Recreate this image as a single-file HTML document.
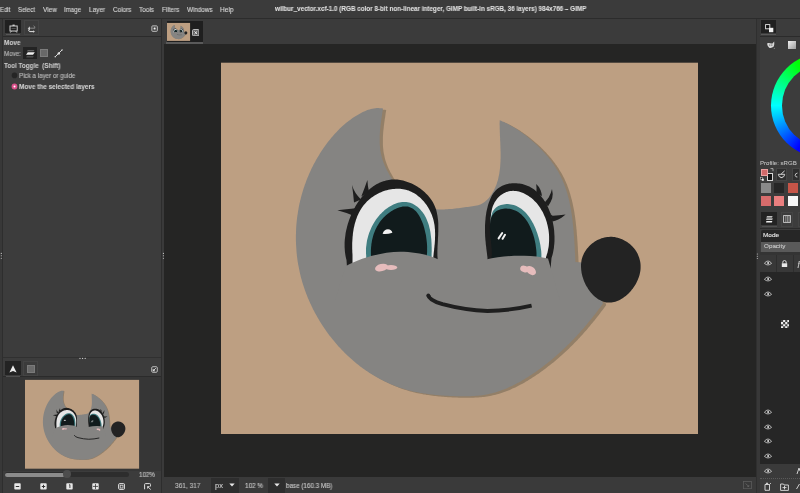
<!DOCTYPE html><html><head><meta charset="utf-8"><style>
html,body{margin:0;padding:0;width:800px;height:493px;overflow:hidden;background:#3d3d3d;font-family:"Liberation Sans", sans-serif;}
div,span,svg{position:absolute;}
span{white-space:pre;transform-origin:0 0;-webkit-text-stroke:0.12px currentColor;will-change:transform;}
</style></head><body>
<div style="left:0px;top:0px;width:800px;height:18px;background:#3b3b3b;"></div>
<div style="left:0px;top:18px;width:800px;height:1px;background:#2c2c2c;"></div>
<div style="left:0px;top:19px;width:161px;height:474px;background:#3c3c3c;"></div>
<div style="left:0px;top:19px;width:2px;height:474px;background:#383838;"></div>
<div style="left:2px;top:19px;width:1px;height:474px;background:#2e2e2e;"></div>
<div style="left:161px;top:19px;width:1px;height:474px;background:#2d2d2d;"></div>
<div style="left:162px;top:19px;width:2px;height:474px;background:#3a3a3a;"></div>
<div style="left:3px;top:36px;width:158px;height:1px;background:#2b2b2b;"></div>
<div style="left:3px;top:357px;width:158px;height:1px;background:#303030;"></div>
<div style="left:3px;top:376px;width:158px;height:1px;background:#2b2b2b;"></div>
<div style="left:3px;top:377px;width:158px;height:94px;background:#363636;"></div>
<div style="left:164px;top:19px;width:592px;height:25px;background:#3b3b3b;"></div>
<div style="left:164px;top:44px;width:592px;height:433px;background:#252524;"></div>
<div style="left:164px;top:477px;width:592px;height:16px;background:#3a3a3a;"></div>
<div style="left:756px;top:19px;width:1px;height:474px;background:#2f2f2f;"></div>
<div style="left:757px;top:19px;width:3px;height:474px;background:#383838;"></div>
<div style="left:760px;top:19px;width:40px;height:474px;background:#3c3c3c;"></div>
<div style="left:760px;top:36px;width:40px;height:1px;background:#2b2b2b;"></div>
<div style="left:166.6px;top:20.6px;width:36px;height:21.3px;background:#1f1f1f;"></div>
<div style="left:166.25px;top:42px;width:36.25px;height:1.7px;background:#5a5a5a;"></div>
<svg style="left:191.6px;top:28.7px" width="7.6" height="7.4" viewBox="0 0 7.6 7.4"><rect x="0.6" y="0.6" width="6.4" height="6.2" rx="0.9" fill="#5c5c5c" stroke="#c8c8c8" stroke-width="1"/><path d="M2.4,2.3 L5.2,5.1 M5.2,2.3 L2.4,5.1" stroke="#f0f0f0" stroke-width="1"/></svg>
<svg style="left:0;top:0" width="800" height="493" viewBox="0 0 800 493">
<g id="art">
<rect x="221" y="62.7" width="477" height="371.3" fill="#bd9f82"/>
<path d="M383.0,108.6 L382.8,110.1 L382.5,111.5 L382.3,113.0 L382.1,114.5 L381.9,116.0 L381.6,117.5 L381.4,119.0 L381.2,120.5 L381.0,122.0 L380.8,123.5 L380.6,125.0 L380.5,126.6 L380.3,128.1 L380.1,129.6 L380.0,131.1 L379.9,132.6 L379.8,134.2 L379.7,135.7 L379.7,137.2 L379.7,138.7 L379.7,140.2 L379.7,141.7 L379.7,143.2 L379.8,144.7 L379.9,146.2 L380.1,147.7 L380.2,149.2 L380.4,150.7 L380.7,152.2 L381.0,153.6 L381.3,155.1 L381.6,156.5 L382.0,158.0 L382.4,159.4 L382.9,160.8 L383.4,162.2 L383.9,163.6 L384.5,165.0 L385.1,166.4 L385.7,167.8 L386.4,169.1 L387.0,170.5 L387.8,171.8 L388.5,173.1 L389.3,174.5 L390.0,175.8 L390.8,177.1 L391.7,178.3 L392.5,179.6 L393.4,180.9 L394.3,182.1 L395.2,183.4 L396.1,184.6 L397.1,185.8 L398.0,187.0 L399.0,188.2 L400.0,189.3 L401.0,190.5 L402.0,191.6 L403.0,192.7 L404.1,193.8 L405.1,194.9 L406.2,195.9 L407.3,196.9 L408.5,197.9 L409.6,198.8 L410.8,199.7 L411.9,200.6 L413.1,201.5 L414.4,202.3 L415.6,203.0 L416.8,203.8 L418.1,204.4 L419.4,205.1 L420.7,205.7 L422.1,206.3 L423.4,206.8 L424.8,207.2 L426.2,207.6 L427.6,208.0 L429.1,208.3 L430.5,208.6 L432.0,208.8 L433.5,209.0 L435.0,209.2 L436.5,209.3 L438.0,209.4 L439.5,209.4 L441.1,209.4 L442.6,209.4 L444.2,209.4 L445.8,209.3 L447.4,209.2 L448.9,209.1 L450.5,209.0 L452.1,208.9 L453.7,208.7 L455.3,208.5 L456.9,208.3 L458.5,208.2 L460.0,208.0 L461.6,207.7 L463.2,207.5 L464.7,207.3 L466.3,207.1 L467.9,206.9 L469.4,206.7 L470.9,206.5 L472.4,206.3 L473.9,206.1 L475.4,205.8 L476.8,205.5 L478.2,205.2 L479.6,204.7 L480.9,204.2 L482.2,203.5 L483.4,202.8 L484.6,202.0 L485.7,201.1 L486.8,200.1 L487.9,199.1 L488.8,198.0 L489.8,196.8 L490.7,195.6 L491.5,194.4 L492.3,193.1 L493.1,191.8 L493.8,190.4 L494.5,189.1 L495.1,187.7 L495.7,186.3 L496.3,184.9 L496.8,183.5 L497.2,182.1 L497.7,180.7 L498.1,179.2 L498.4,177.8 L498.7,176.3 L499.0,174.9 L499.3,173.4 L499.5,171.9 L499.7,170.4 L499.9,168.9 L500.1,167.4 L500.2,165.9 L500.3,164.3 L500.4,162.8 L500.5,161.3 L500.5,159.8 L500.6,158.2 L500.6,156.7 L500.6,155.1 L500.6,153.6 L500.6,152.0 L500.5,150.5 L500.5,149.0 L500.4,147.4 L500.4,145.9 L500.3,144.3 L500.3,142.8 L500.2,141.2 L500.1,139.7 L500.1,138.2 L500.0,136.7 L499.9,135.1 L499.9,133.6 L499.8,132.1 L499.8,130.6 L499.7,129.1 L499.7,127.6 L499.7,126.1 L499.6,124.7 L499.6,123.2 L499.7,121.7 L499.7,120.3 L501.1,120.8 L502.5,121.4 L503.8,122.0 L505.2,122.7 L506.5,123.3 L507.9,124.0 L509.2,124.7 L510.5,125.4 L511.8,126.2 L513.1,126.9 L514.4,127.7 L515.7,128.5 L517.0,129.3 L518.2,130.2 L519.5,131.0 L520.7,131.9 L522.0,132.8 L523.2,133.7 L524.4,134.6 L525.7,135.6 L526.9,136.5 L528.1,137.5 L529.3,138.5 L530.5,139.4 L531.6,140.4 L532.8,141.5 L534.0,142.5 L535.1,143.5 L536.2,144.6 L537.4,145.6 L538.5,146.7 L539.6,147.8 L540.7,148.9 L541.7,150.0 L542.8,151.1 L543.8,152.2 L544.9,153.4 L545.9,154.5 L546.9,155.7 L547.9,156.8 L548.8,158.0 L549.8,159.2 L550.7,160.4 L551.6,161.6 L552.5,162.9 L553.4,164.1 L554.3,165.4 L555.1,166.6 L555.9,167.9 L556.7,169.2 L557.5,170.5 L558.3,171.8 L559.0,173.1 L559.7,174.4 L560.4,175.8 L561.1,177.1 L561.7,178.5 L562.3,179.8 L562.9,181.2 L563.5,182.6 L564.1,184.0 L564.6,185.4 L565.1,186.8 L565.6,188.2 L566.1,189.6 L566.5,191.1 L567.0,192.5 L567.4,194.0 L567.8,195.4 L568.2,196.9 L568.6,198.3 L568.9,199.8 L569.3,201.3 L569.6,202.8 L569.9,204.3 L570.2,205.8 L570.5,207.3 L570.8,208.8 L571.1,210.3 L571.3,211.8 L571.5,213.3 L571.8,214.8 L572.0,216.3 L572.2,217.8 L572.4,219.4 L572.6,220.9 L572.7,222.4 L572.9,224.0 L573.1,225.5 L573.2,227.0 L573.4,228.6 L573.5,230.1 L573.6,231.6 L573.7,233.2 L573.9,234.7 L574.0,236.2 L574.1,237.8 L574.2,239.3 L574.3,240.8 L574.4,242.4 L574.5,243.9 L574.6,245.4 L574.7,246.9 L574.7,248.5 L574.8,250.0 L574.9,251.5 L575.0,253.0 L575.1,254.5 L575.2,256.0 L575.2,257.5 L575.3,259.0 L575.4,260.5 L575.5,262.0 L590.0,263.0 L603.0,303.5 L602.1,304.7 L601.2,306.0 L600.3,307.2 L599.4,308.4 L598.5,309.6 L597.6,310.8 L596.7,312.0 L595.8,313.2 L594.8,314.4 L593.9,315.6 L593.0,316.8 L592.0,318.0 L591.1,319.2 L590.1,320.3 L589.2,321.5 L588.2,322.6 L587.3,323.8 L586.3,325.0 L585.3,326.1 L584.4,327.2 L583.4,328.4 L582.4,329.5 L581.4,330.6 L580.4,331.8 L579.4,332.9 L578.4,334.0 L577.4,335.1 L576.4,336.2 L575.3,337.3 L574.3,338.4 L573.3,339.5 L572.2,340.5 L571.2,341.6 L570.1,342.7 L569.1,343.7 L568.0,344.8 L566.9,345.8 L565.9,346.9 L564.8,347.9 L563.7,348.9 L562.6,350.0 L561.5,351.0 L560.4,352.0 L559.3,353.0 L558.2,354.0 L557.0,355.0 L555.9,356.0 L554.8,357.0 L553.6,358.0 L552.5,358.9 L551.3,359.9 L550.2,360.9 L549.0,361.8 L547.8,362.8 L546.6,363.7 L545.4,364.6 L544.2,365.6 L543.0,366.5 L541.8,367.4 L540.6,368.3 L539.4,369.2 L538.2,370.1 L536.9,371.0 L535.7,371.9 L534.4,372.7 L533.1,373.6 L531.9,374.4 L530.6,375.3 L529.3,376.1 L528.0,377.0 L526.7,377.8 L525.4,378.6 L524.1,379.4 L522.8,380.1 L521.5,380.9 L520.2,381.7 L518.8,382.4 L517.5,383.1 L516.2,383.8 L514.8,384.5 L513.4,385.2 L512.1,385.9 L510.7,386.5 L509.3,387.1 L508.0,387.8 L506.6,388.4 L505.2,388.9 L503.8,389.5 L502.4,390.0 L501.0,390.5 L499.6,391.0 L498.2,391.5 L496.7,391.9 L495.3,392.4 L493.9,392.8 L492.5,393.2 L491.0,393.5 L489.6,393.8 L488.1,394.2 L486.7,394.4 L485.2,394.7 L483.8,394.9 L482.3,395.2 L480.8,395.4 L479.4,395.5 L477.9,395.7 L476.4,395.8 L474.9,395.9 L473.5,396.0 L472.0,396.1 L470.5,396.2 L469.0,396.3 L467.5,396.3 L466.0,396.3 L464.5,396.3 L463.0,396.3 L461.5,396.3 L460.0,396.3 L458.5,396.3 L456.9,396.2 L455.4,396.2 L453.9,396.1 L452.4,396.1 L450.9,396.0 L449.3,395.9 L447.8,395.8 L446.3,395.7 L444.8,395.7 L443.2,395.6 L441.7,395.4 L440.2,395.3 L438.7,395.2 L437.1,395.1 L435.6,394.9 L434.1,394.8 L432.5,394.6 L431.0,394.4 L429.5,394.2 L428.0,394.1 L426.5,393.8 L425.0,393.6 L423.4,393.4 L421.9,393.1 L420.4,392.9 L418.9,392.6 L417.4,392.3 L416.0,392.0 L414.5,391.7 L413.0,391.4 L411.5,391.0 L410.1,390.7 L408.6,390.3 L407.1,389.9 L405.7,389.5 L404.2,389.1 L402.8,388.6 L401.4,388.2 L400.0,387.7 L398.5,387.2 L397.1,386.7 L395.7,386.2 L394.3,385.6 L392.9,385.1 L391.6,384.5 L390.2,383.9 L388.8,383.3 L387.5,382.7 L386.1,382.1 L384.8,381.5 L383.4,380.8 L382.1,380.1 L380.8,379.4 L379.4,378.7 L378.1,378.0 L376.8,377.3 L375.5,376.6 L374.2,375.8 L373.0,375.0 L371.7,374.3 L370.4,373.5 L369.2,372.7 L367.9,371.8 L366.7,371.0 L365.5,370.2 L364.2,369.3 L363.0,368.4 L361.8,367.6 L360.6,366.7 L359.4,365.7 L358.3,364.8 L357.1,363.9 L355.9,363.0 L354.8,362.0 L353.6,361.0 L352.5,360.1 L351.4,359.1 L350.2,358.1 L349.1,357.1 L348.0,356.0 L346.9,355.0 L345.9,354.0 L344.8,352.9 L343.7,351.8 L342.7,350.8 L341.6,349.7 L340.6,348.6 L339.6,347.5 L338.5,346.4 L337.5,345.2 L336.5,344.1 L335.6,343.0 L334.6,341.8 L333.6,340.6 L332.7,339.5 L331.7,338.3 L330.8,337.1 L329.8,335.9 L328.9,334.7 L328.0,333.5 L327.1,332.3 L326.2,331.0 L325.4,329.8 L324.5,328.5 L323.7,327.3 L322.8,326.0 L322.0,324.7 L321.2,323.5 L320.4,322.2 L319.6,320.9 L318.8,319.6 L318.0,318.3 L317.3,317.0 L316.5,315.6 L315.8,314.3 L315.0,313.0 L314.3,311.6 L313.6,310.3 L312.9,308.9 L312.3,307.6 L311.6,306.2 L311.0,304.8 L310.3,303.5 L309.7,302.1 L309.1,300.7 L308.5,299.3 L307.9,297.9 L307.3,296.5 L306.8,295.1 L306.2,293.7 L305.7,292.3 L305.2,290.9 L304.7,289.4 L304.2,288.0 L303.7,286.6 L303.2,285.1 L302.8,283.7 L302.3,282.2 L301.9,280.8 L301.5,279.3 L301.1,277.9 L300.7,276.4 L300.4,275.0 L300.0,273.5 L299.7,272.0 L299.4,270.6 L299.1,269.1 L298.8,267.6 L298.5,266.1 L298.2,264.7 L298.0,263.2 L297.7,261.7 L297.5,260.2 L297.3,258.7 L297.1,257.2 L296.9,255.7 L296.8,254.3 L296.6,252.8 L296.5,251.3 L296.4,249.8 L296.3,248.3 L296.2,246.8 L296.1,245.3 L296.0,243.8 L296.0,242.3 L295.9,240.8 L295.9,239.3 L295.9,237.8 L295.9,236.3 L295.9,234.8 L296.0,233.3 L296.0,231.8 L296.1,230.3 L296.1,228.8 L296.2,227.3 L296.3,225.8 L296.4,224.3 L296.6,222.8 L296.7,221.3 L296.9,219.8 L297.0,218.3 L297.2,216.9 L297.4,215.4 L297.7,213.9 L297.9,212.4 L298.1,210.9 L298.4,209.5 L298.6,208.0 L298.9,206.5 L299.2,205.0 L299.5,203.6 L299.9,202.1 L300.2,200.6 L300.6,199.2 L300.9,197.7 L301.3,196.3 L301.7,194.8 L302.1,193.4 L302.5,191.9 L303.0,190.5 L303.4,189.1 L303.9,187.6 L304.4,186.2 L304.8,184.8 L305.4,183.4 L305.9,182.0 L306.4,180.6 L306.9,179.2 L307.5,177.8 L308.1,176.4 L308.7,175.0 L309.3,173.6 L309.9,172.2 L310.5,170.9 L311.1,169.5 L311.8,168.1 L312.5,166.8 L313.1,165.4 L313.8,164.1 L314.6,162.8 L315.3,161.4 L316.0,160.1 L316.8,158.8 L317.5,157.5 L318.3,156.2 L319.1,154.9 L319.9,153.6 L320.7,152.3 L321.5,151.0 L322.4,149.8 L323.2,148.5 L324.1,147.3 L325.0,146.0 L325.9,144.8 L326.8,143.6 L327.7,142.3 L328.7,141.1 L329.6,139.9 L330.6,138.8 L331.5,137.6 L332.5,136.4 L333.5,135.3 L334.6,134.1 L335.6,133.0 L336.6,131.9 L337.7,130.8 L338.7,129.7 L339.8,128.6 L340.9,127.6 L342.0,126.6 L343.1,125.6 L344.3,124.6 L345.4,123.6 L346.6,122.6 L347.7,121.7 L348.9,120.8 L350.1,119.9 L351.3,119.0 L352.6,118.1 L353.8,117.3 L355.0,116.5 L356.3,115.7 L357.6,114.9 L358.9,114.2 L360.2,113.5 L361.5,112.8 L362.8,112.1 L364.1,111.5 L365.5,110.9 L366.8,110.3 L368.2,109.8 L369.6,109.4 L371.0,109.0 L372.4,108.7 L373.9,108.4 L375.4,108.2 L376.8,108.1 L378.4,108.1 L379.9,108.2 L381.4,108.3 L383.0,108.6Z" fill="#937f67" transform="translate(3.2,1.5)"/>
<path d="M383.0,108.6 L382.8,110.1 L382.5,111.5 L382.3,113.0 L382.1,114.5 L381.9,116.0 L381.6,117.5 L381.4,119.0 L381.2,120.5 L381.0,122.0 L380.8,123.5 L380.6,125.0 L380.5,126.6 L380.3,128.1 L380.1,129.6 L380.0,131.1 L379.9,132.6 L379.8,134.2 L379.7,135.7 L379.7,137.2 L379.7,138.7 L379.7,140.2 L379.7,141.7 L379.7,143.2 L379.8,144.7 L379.9,146.2 L380.1,147.7 L380.2,149.2 L380.4,150.7 L380.7,152.2 L381.0,153.6 L381.3,155.1 L381.6,156.5 L382.0,158.0 L382.4,159.4 L382.9,160.8 L383.4,162.2 L383.9,163.6 L384.5,165.0 L385.1,166.4 L385.7,167.8 L386.4,169.1 L387.0,170.5 L387.8,171.8 L388.5,173.1 L389.3,174.5 L390.0,175.8 L390.8,177.1 L391.7,178.3 L392.5,179.6 L393.4,180.9 L394.3,182.1 L395.2,183.4 L396.1,184.6 L397.1,185.8 L398.0,187.0 L399.0,188.2 L400.0,189.3 L401.0,190.5 L402.0,191.6 L403.0,192.7 L404.1,193.8 L405.1,194.9 L406.2,195.9 L407.3,196.9 L408.5,197.9 L409.6,198.8 L410.8,199.7 L411.9,200.6 L413.1,201.5 L414.4,202.3 L415.6,203.0 L416.8,203.8 L418.1,204.4 L419.4,205.1 L420.7,205.7 L422.1,206.3 L423.4,206.8 L424.8,207.2 L426.2,207.6 L427.6,208.0 L429.1,208.3 L430.5,208.6 L432.0,208.8 L433.5,209.0 L435.0,209.2 L436.5,209.3 L438.0,209.4 L439.5,209.4 L441.1,209.4 L442.6,209.4 L444.2,209.4 L445.8,209.3 L447.4,209.2 L448.9,209.1 L450.5,209.0 L452.1,208.9 L453.7,208.7 L455.3,208.5 L456.9,208.3 L458.5,208.2 L460.0,208.0 L461.6,207.7 L463.2,207.5 L464.7,207.3 L466.3,207.1 L467.9,206.9 L469.4,206.7 L470.9,206.5 L472.4,206.3 L473.9,206.1 L475.4,205.8 L476.8,205.5 L478.2,205.2 L479.6,204.7 L480.9,204.2 L482.2,203.5 L483.4,202.8 L484.6,202.0 L485.7,201.1 L486.8,200.1 L487.9,199.1 L488.8,198.0 L489.8,196.8 L490.7,195.6 L491.5,194.4 L492.3,193.1 L493.1,191.8 L493.8,190.4 L494.5,189.1 L495.1,187.7 L495.7,186.3 L496.3,184.9 L496.8,183.5 L497.2,182.1 L497.7,180.7 L498.1,179.2 L498.4,177.8 L498.7,176.3 L499.0,174.9 L499.3,173.4 L499.5,171.9 L499.7,170.4 L499.9,168.9 L500.1,167.4 L500.2,165.9 L500.3,164.3 L500.4,162.8 L500.5,161.3 L500.5,159.8 L500.6,158.2 L500.6,156.7 L500.6,155.1 L500.6,153.6 L500.6,152.0 L500.5,150.5 L500.5,149.0 L500.4,147.4 L500.4,145.9 L500.3,144.3 L500.3,142.8 L500.2,141.2 L500.1,139.7 L500.1,138.2 L500.0,136.7 L499.9,135.1 L499.9,133.6 L499.8,132.1 L499.8,130.6 L499.7,129.1 L499.7,127.6 L499.7,126.1 L499.6,124.7 L499.6,123.2 L499.7,121.7 L499.7,120.3 L501.1,120.8 L502.5,121.4 L503.8,122.0 L505.2,122.7 L506.5,123.3 L507.9,124.0 L509.2,124.7 L510.5,125.4 L511.8,126.2 L513.1,126.9 L514.4,127.7 L515.7,128.5 L517.0,129.3 L518.2,130.2 L519.5,131.0 L520.7,131.9 L522.0,132.8 L523.2,133.7 L524.4,134.6 L525.7,135.6 L526.9,136.5 L528.1,137.5 L529.3,138.5 L530.5,139.4 L531.6,140.4 L532.8,141.5 L534.0,142.5 L535.1,143.5 L536.2,144.6 L537.4,145.6 L538.5,146.7 L539.6,147.8 L540.7,148.9 L541.7,150.0 L542.8,151.1 L543.8,152.2 L544.9,153.4 L545.9,154.5 L546.9,155.7 L547.9,156.8 L548.8,158.0 L549.8,159.2 L550.7,160.4 L551.6,161.6 L552.5,162.9 L553.4,164.1 L554.3,165.4 L555.1,166.6 L555.9,167.9 L556.7,169.2 L557.5,170.5 L558.3,171.8 L559.0,173.1 L559.7,174.4 L560.4,175.8 L561.1,177.1 L561.7,178.5 L562.3,179.8 L562.9,181.2 L563.5,182.6 L564.1,184.0 L564.6,185.4 L565.1,186.8 L565.6,188.2 L566.1,189.6 L566.5,191.1 L567.0,192.5 L567.4,194.0 L567.8,195.4 L568.2,196.9 L568.6,198.3 L568.9,199.8 L569.3,201.3 L569.6,202.8 L569.9,204.3 L570.2,205.8 L570.5,207.3 L570.8,208.8 L571.1,210.3 L571.3,211.8 L571.5,213.3 L571.8,214.8 L572.0,216.3 L572.2,217.8 L572.4,219.4 L572.6,220.9 L572.7,222.4 L572.9,224.0 L573.1,225.5 L573.2,227.0 L573.4,228.6 L573.5,230.1 L573.6,231.6 L573.7,233.2 L573.9,234.7 L574.0,236.2 L574.1,237.8 L574.2,239.3 L574.3,240.8 L574.4,242.4 L574.5,243.9 L574.6,245.4 L574.7,246.9 L574.7,248.5 L574.8,250.0 L574.9,251.5 L575.0,253.0 L575.1,254.5 L575.2,256.0 L575.2,257.5 L575.3,259.0 L575.4,260.5 L575.5,262.0 L590.0,263.0 L603.0,303.5 L602.1,304.7 L601.2,306.0 L600.3,307.2 L599.4,308.4 L598.5,309.6 L597.6,310.8 L596.7,312.0 L595.8,313.2 L594.8,314.4 L593.9,315.6 L593.0,316.8 L592.0,318.0 L591.1,319.2 L590.1,320.3 L589.2,321.5 L588.2,322.6 L587.3,323.8 L586.3,325.0 L585.3,326.1 L584.4,327.2 L583.4,328.4 L582.4,329.5 L581.4,330.6 L580.4,331.8 L579.4,332.9 L578.4,334.0 L577.4,335.1 L576.4,336.2 L575.3,337.3 L574.3,338.4 L573.3,339.5 L572.2,340.5 L571.2,341.6 L570.1,342.7 L569.1,343.7 L568.0,344.8 L566.9,345.8 L565.9,346.9 L564.8,347.9 L563.7,348.9 L562.6,350.0 L561.5,351.0 L560.4,352.0 L559.3,353.0 L558.2,354.0 L557.0,355.0 L555.9,356.0 L554.8,357.0 L553.6,358.0 L552.5,358.9 L551.3,359.9 L550.2,360.9 L549.0,361.8 L547.8,362.8 L546.6,363.7 L545.4,364.6 L544.2,365.6 L543.0,366.5 L541.8,367.4 L540.6,368.3 L539.4,369.2 L538.2,370.1 L536.9,371.0 L535.7,371.9 L534.4,372.7 L533.1,373.6 L531.9,374.4 L530.6,375.3 L529.3,376.1 L528.0,377.0 L526.7,377.8 L525.4,378.6 L524.1,379.4 L522.8,380.1 L521.5,380.9 L520.2,381.7 L518.8,382.4 L517.5,383.1 L516.2,383.8 L514.8,384.5 L513.4,385.2 L512.1,385.9 L510.7,386.5 L509.3,387.1 L508.0,387.8 L506.6,388.4 L505.2,388.9 L503.8,389.5 L502.4,390.0 L501.0,390.5 L499.6,391.0 L498.2,391.5 L496.7,391.9 L495.3,392.4 L493.9,392.8 L492.5,393.2 L491.0,393.5 L489.6,393.8 L488.1,394.2 L486.7,394.4 L485.2,394.7 L483.8,394.9 L482.3,395.2 L480.8,395.4 L479.4,395.5 L477.9,395.7 L476.4,395.8 L474.9,395.9 L473.5,396.0 L472.0,396.1 L470.5,396.2 L469.0,396.3 L467.5,396.3 L466.0,396.3 L464.5,396.3 L463.0,396.3 L461.5,396.3 L460.0,396.3 L458.5,396.3 L456.9,396.2 L455.4,396.2 L453.9,396.1 L452.4,396.1 L450.9,396.0 L449.3,395.9 L447.8,395.8 L446.3,395.7 L444.8,395.7 L443.2,395.6 L441.7,395.4 L440.2,395.3 L438.7,395.2 L437.1,395.1 L435.6,394.9 L434.1,394.8 L432.5,394.6 L431.0,394.4 L429.5,394.2 L428.0,394.1 L426.5,393.8 L425.0,393.6 L423.4,393.4 L421.9,393.1 L420.4,392.9 L418.9,392.6 L417.4,392.3 L416.0,392.0 L414.5,391.7 L413.0,391.4 L411.5,391.0 L410.1,390.7 L408.6,390.3 L407.1,389.9 L405.7,389.5 L404.2,389.1 L402.8,388.6 L401.4,388.2 L400.0,387.7 L398.5,387.2 L397.1,386.7 L395.7,386.2 L394.3,385.6 L392.9,385.1 L391.6,384.5 L390.2,383.9 L388.8,383.3 L387.5,382.7 L386.1,382.1 L384.8,381.5 L383.4,380.8 L382.1,380.1 L380.8,379.4 L379.4,378.7 L378.1,378.0 L376.8,377.3 L375.5,376.6 L374.2,375.8 L373.0,375.0 L371.7,374.3 L370.4,373.5 L369.2,372.7 L367.9,371.8 L366.7,371.0 L365.5,370.2 L364.2,369.3 L363.0,368.4 L361.8,367.6 L360.6,366.7 L359.4,365.7 L358.3,364.8 L357.1,363.9 L355.9,363.0 L354.8,362.0 L353.6,361.0 L352.5,360.1 L351.4,359.1 L350.2,358.1 L349.1,357.1 L348.0,356.0 L346.9,355.0 L345.9,354.0 L344.8,352.9 L343.7,351.8 L342.7,350.8 L341.6,349.7 L340.6,348.6 L339.6,347.5 L338.5,346.4 L337.5,345.2 L336.5,344.1 L335.6,343.0 L334.6,341.8 L333.6,340.6 L332.7,339.5 L331.7,338.3 L330.8,337.1 L329.8,335.9 L328.9,334.7 L328.0,333.5 L327.1,332.3 L326.2,331.0 L325.4,329.8 L324.5,328.5 L323.7,327.3 L322.8,326.0 L322.0,324.7 L321.2,323.5 L320.4,322.2 L319.6,320.9 L318.8,319.6 L318.0,318.3 L317.3,317.0 L316.5,315.6 L315.8,314.3 L315.0,313.0 L314.3,311.6 L313.6,310.3 L312.9,308.9 L312.3,307.6 L311.6,306.2 L311.0,304.8 L310.3,303.5 L309.7,302.1 L309.1,300.7 L308.5,299.3 L307.9,297.9 L307.3,296.5 L306.8,295.1 L306.2,293.7 L305.7,292.3 L305.2,290.9 L304.7,289.4 L304.2,288.0 L303.7,286.6 L303.2,285.1 L302.8,283.7 L302.3,282.2 L301.9,280.8 L301.5,279.3 L301.1,277.9 L300.7,276.4 L300.4,275.0 L300.0,273.5 L299.7,272.0 L299.4,270.6 L299.1,269.1 L298.8,267.6 L298.5,266.1 L298.2,264.7 L298.0,263.2 L297.7,261.7 L297.5,260.2 L297.3,258.7 L297.1,257.2 L296.9,255.7 L296.8,254.3 L296.6,252.8 L296.5,251.3 L296.4,249.8 L296.3,248.3 L296.2,246.8 L296.1,245.3 L296.0,243.8 L296.0,242.3 L295.9,240.8 L295.9,239.3 L295.9,237.8 L295.9,236.3 L295.9,234.8 L296.0,233.3 L296.0,231.8 L296.1,230.3 L296.1,228.8 L296.2,227.3 L296.3,225.8 L296.4,224.3 L296.6,222.8 L296.7,221.3 L296.9,219.8 L297.0,218.3 L297.2,216.9 L297.4,215.4 L297.7,213.9 L297.9,212.4 L298.1,210.9 L298.4,209.5 L298.6,208.0 L298.9,206.5 L299.2,205.0 L299.5,203.6 L299.9,202.1 L300.2,200.6 L300.6,199.2 L300.9,197.7 L301.3,196.3 L301.7,194.8 L302.1,193.4 L302.5,191.9 L303.0,190.5 L303.4,189.1 L303.9,187.6 L304.4,186.2 L304.8,184.8 L305.4,183.4 L305.9,182.0 L306.4,180.6 L306.9,179.2 L307.5,177.8 L308.1,176.4 L308.7,175.0 L309.3,173.6 L309.9,172.2 L310.5,170.9 L311.1,169.5 L311.8,168.1 L312.5,166.8 L313.1,165.4 L313.8,164.1 L314.6,162.8 L315.3,161.4 L316.0,160.1 L316.8,158.8 L317.5,157.5 L318.3,156.2 L319.1,154.9 L319.9,153.6 L320.7,152.3 L321.5,151.0 L322.4,149.8 L323.2,148.5 L324.1,147.3 L325.0,146.0 L325.9,144.8 L326.8,143.6 L327.7,142.3 L328.7,141.1 L329.6,139.9 L330.6,138.8 L331.5,137.6 L332.5,136.4 L333.5,135.3 L334.6,134.1 L335.6,133.0 L336.6,131.9 L337.7,130.8 L338.7,129.7 L339.8,128.6 L340.9,127.6 L342.0,126.6 L343.1,125.6 L344.3,124.6 L345.4,123.6 L346.6,122.6 L347.7,121.7 L348.9,120.8 L350.1,119.9 L351.3,119.0 L352.6,118.1 L353.8,117.3 L355.0,116.5 L356.3,115.7 L357.6,114.9 L358.9,114.2 L360.2,113.5 L361.5,112.8 L362.8,112.1 L364.1,111.5 L365.5,110.9 L366.8,110.3 L368.2,109.8 L369.6,109.4 L371.0,109.0 L372.4,108.7 L373.9,108.4 L375.4,108.2 L376.8,108.1 L378.4,108.1 L379.9,108.2 L381.4,108.3 L383.0,108.6Z" fill="#858482"/>
<path d="M611.8,236.8 L613.3,236.9 L614.8,237.1 L616.2,237.4 L617.7,237.8 L619.2,238.2 L620.6,238.7 L622.1,239.3 L623.5,239.9 L624.8,240.7 L626.2,241.4 L627.5,242.3 L628.7,243.2 L629.9,244.1 L631.1,245.2 L632.2,246.2 L633.3,247.4 L634.2,248.5 L635.2,249.7 L636.0,251.0 L636.8,252.3 L637.5,253.6 L638.1,255.0 L638.7,256.4 L639.2,257.8 L639.6,259.2 L640.0,260.7 L640.3,262.2 L640.5,263.7 L640.6,265.2 L640.6,266.7 L640.6,268.2 L640.5,269.7 L640.3,271.2 L640.0,272.8 L639.7,274.3 L639.3,275.8 L638.8,277.2 L638.2,278.7 L637.6,280.2 L637.0,281.6 L636.3,283.0 L635.5,284.4 L634.7,285.8 L633.8,287.1 L632.9,288.4 L631.9,289.6 L630.9,290.9 L629.9,292.0 L628.8,293.2 L627.7,294.2 L626.6,295.3 L625.4,296.2 L624.2,297.1 L623.0,298.0 L621.7,298.8 L620.5,299.5 L619.2,300.2 L617.9,300.8 L616.6,301.3 L615.3,301.7 L614.0,302.1 L612.7,302.3 L611.4,302.5 L610.0,302.6 L608.7,302.6 L607.4,302.6 L606.1,302.4 L604.8,302.1 L603.6,301.7 L602.3,301.3 L601.1,300.7 L599.9,300.1 L598.6,299.4 L597.5,298.7 L596.3,297.8 L595.2,296.9 L594.1,295.9 L593.0,294.9 L592.0,293.8 L591.0,292.7 L590.0,291.5 L589.1,290.2 L588.2,289.0 L587.4,287.6 L586.5,286.3 L585.8,284.9 L585.1,283.4 L584.4,282.0 L583.8,280.5 L583.3,279.0 L582.8,277.5 L582.3,276.0 L582.0,274.4 L581.6,272.9 L581.4,271.3 L581.2,269.8 L581.1,268.2 L581.0,266.7 L581.0,265.1 L581.1,263.6 L581.3,262.1 L581.5,260.6 L581.8,259.1 L582.2,257.7 L582.7,256.3 L583.3,254.9 L583.9,253.6 L584.6,252.3 L585.4,251.0 L586.2,249.8 L587.1,248.6 L588.1,247.4 L589.1,246.3 L590.1,245.3 L591.2,244.3 L592.4,243.3 L593.6,242.4 L594.8,241.6 L596.1,240.8 L597.4,240.1 L598.7,239.4 L600.1,238.9 L601.5,238.3 L602.9,237.9 L604.4,237.5 L605.8,237.2 L607.3,237.0 L608.8,236.9 L610.3,236.8Z" fill="#232323"/>
<path d="M347.5,275.0 L346.5,260.0 L346.1,258.6 L345.8,257.3 L345.5,255.8 L345.3,254.4 L345.1,253.0 L344.9,251.5 L344.8,250.1 L344.7,248.6 L344.6,247.1 L344.6,245.6 L344.6,244.1 L344.6,242.6 L344.7,241.0 L344.8,239.5 L345.0,237.9 L345.2,236.4 L345.4,234.9 L345.6,233.3 L345.9,231.8 L346.2,230.2 L346.6,228.7 L347.0,227.1 L347.4,225.6 L347.8,224.0 L348.3,222.5 L348.8,221.0 L349.3,219.5 L349.9,218.0 L350.5,216.5 L351.1,215.0 L351.7,213.6 L352.4,212.1 L353.1,210.7 L353.8,209.3 L354.6,207.9 L355.3,206.5 L356.2,205.1 L357.0,203.8 L357.8,202.5 L358.7,201.2 L359.6,199.9 L360.5,198.7 L361.5,197.5 L362.4,196.3 L363.4,195.2 L364.5,194.0 L365.5,193.0 L366.5,191.9 L367.6,190.9 L368.7,189.9 L369.8,188.9 L371.0,188.0 L372.1,187.2 L373.3,186.3 L374.5,185.5 L375.7,184.8 L376.9,184.1 L378.2,183.4 L379.4,182.8 L380.7,182.3 L382.0,181.8 L383.3,181.3 L384.7,180.9 L386.0,180.5 L387.4,180.2 L388.7,180.0 L390.1,179.8 L391.5,179.6 L392.9,179.5 L394.3,179.5 L395.8,179.5 L397.2,179.6 L398.7,179.8 L400.1,180.0 L401.6,180.3 L403.1,180.6 L404.5,181.0 L406.0,181.4 L407.4,181.9 L408.9,182.4 L410.3,183.0 L411.7,183.6 L413.1,184.3 L414.5,185.0 L415.9,185.8 L417.2,186.6 L418.6,187.4 L419.9,188.3 L421.1,189.3 L422.4,190.2 L423.6,191.2 L424.8,192.3 L425.9,193.4 L427.0,194.5 L428.0,195.6 L429.0,196.8 L430.0,198.0 L430.9,199.3 L431.8,200.5 L432.6,201.8 L433.3,203.1 L434.0,204.5 L434.6,205.8 L435.2,207.2 L435.7,208.6 L436.2,210.1 L436.6,211.5 L436.9,213.0 L437.2,214.5 L437.5,216.0 L437.7,217.5 L437.9,219.0 L438.1,220.5 L438.2,222.1 L438.3,223.6 L438.3,225.2 L438.3,226.7 L438.3,228.3 L438.3,229.9 L438.3,231.4 L438.2,233.0 L438.2,234.6 L438.1,236.1 L438.0,237.7 L437.9,239.3 L437.9,240.8 L437.8,242.3 L437.7,243.9 L437.6,245.4 L437.5,246.9 L437.5,248.4 L437.4,249.9 L437.4,251.4 L437.4,252.9 L437.4,254.3 L437.4,255.7 L437.5,257.1 L437.6,258.5 L437.0,275.0Z" fill="#1e1e1e"/>
<path d="M352.5,275.0 L352.5,254.7 L352.4,253.3 L352.3,251.9 L352.3,250.5 L352.2,249.0 L352.2,247.5 L352.2,246.0 L352.2,244.5 L352.2,243.0 L352.3,241.5 L352.4,239.9 L352.5,238.4 L352.6,236.8 L352.8,235.3 L352.9,233.7 L353.1,232.2 L353.4,230.6 L353.6,229.1 L353.9,227.5 L354.3,226.0 L354.6,224.5 L355.0,223.0 L355.5,221.5 L355.9,220.0 L356.5,218.5 L357.0,217.0 L357.6,215.6 L358.2,214.2 L358.9,212.8 L359.6,211.4 L360.4,210.1 L361.2,208.8 L362.0,207.5 L362.9,206.3 L363.8,205.0 L364.8,203.9 L365.9,202.7 L366.9,201.6 L368.1,200.5 L369.2,199.5 L370.4,198.5 L371.6,197.6 L372.9,196.7 L374.2,195.8 L375.5,195.0 L376.9,194.2 L378.2,193.5 L379.6,192.8 L381.1,192.2 L382.5,191.6 L383.9,191.1 L385.4,190.6 L386.9,190.2 L388.3,189.8 L389.8,189.5 L391.3,189.2 L392.8,189.0 L394.3,188.9 L395.8,188.8 L397.2,188.7 L398.7,188.7 L400.2,188.8 L401.6,189.0 L403.1,189.2 L404.5,189.4 L405.9,189.8 L407.3,190.2 L408.6,190.6 L410.0,191.2 L411.3,191.7 L412.6,192.4 L413.8,193.1 L415.1,193.8 L416.3,194.6 L417.4,195.5 L418.6,196.4 L419.7,197.3 L420.8,198.3 L421.9,199.4 L422.9,200.4 L423.9,201.6 L424.8,202.7 L425.8,203.9 L426.6,205.1 L427.5,206.4 L428.3,207.7 L429.0,209.0 L429.8,210.4 L430.4,211.8 L431.1,213.2 L431.7,214.6 L432.2,216.1 L432.7,217.5 L433.2,219.0 L433.6,220.5 L433.9,222.1 L434.2,223.6 L434.5,225.1 L434.7,226.7 L434.8,228.3 L435.0,229.8 L435.0,231.4 L435.1,233.0 L435.1,234.6 L435.1,236.1 L435.0,237.7 L435.0,239.3 L434.9,240.9 L434.8,242.4 L434.7,244.0 L434.5,245.5 L434.4,247.0 L434.2,248.6 L434.1,250.1 L433.9,251.6 L433.7,253.0 L433.6,254.5 L433.4,255.9 L433.3,257.3 L433.0,275.0Z" fill="#e6e6e6"/>
<path d="M366.2,275.0 L366.2,256.0 L366.1,254.6 L366.0,253.2 L366.0,251.7 L366.0,250.3 L366.0,248.8 L366.1,247.3 L366.3,245.8 L366.5,244.3 L366.7,242.8 L366.9,241.3 L367.2,239.8 L367.6,238.3 L368.0,236.8 L368.4,235.3 L368.9,233.8 L369.4,232.3 L370.0,230.9 L370.6,229.4 L371.2,227.9 L371.9,226.5 L372.7,225.1 L373.4,223.7 L374.3,222.3 L375.1,221.0 L376.0,219.6 L377.0,218.3 L378.0,217.1 L379.0,215.8 L380.0,214.6 L381.2,213.4 L382.3,212.3 L383.5,211.2 L384.7,210.1 L386.0,209.1 L387.2,208.2 L388.5,207.3 L389.8,206.5 L391.2,205.7 L392.5,205.0 L393.9,204.3 L395.3,203.7 L396.6,203.2 L398.0,202.8 L399.4,202.4 L400.8,202.2 L402.2,202.0 L403.5,201.9 L404.9,201.9 L406.2,202.0 L407.6,202.2 L408.9,202.4 L410.2,202.8 L411.4,203.3 L412.7,203.8 L413.9,204.5 L415.1,205.2 L416.2,205.9 L417.4,206.8 L418.5,207.7 L419.5,208.7 L420.5,209.8 L421.5,210.9 L422.4,212.1 L423.3,213.3 L424.2,214.6 L425.0,215.9 L425.7,217.3 L426.4,218.7 L427.0,220.2 L427.6,221.7 L428.2,223.2 L428.7,224.7 L429.1,226.3 L429.5,227.9 L429.9,229.5 L430.2,231.1 L430.5,232.8 L430.7,234.4 L430.9,236.1 L431.1,237.7 L431.3,239.3 L431.4,241.0 L431.5,242.6 L431.6,244.2 L431.6,245.8 L431.7,247.3 L431.7,248.9 L431.7,250.4 L431.7,251.8 L431.6,253.3 L431.6,254.7 L431.6,256.0 L431.5,257.3 L431.5,275.0Z" fill="#3f7d80"/>
<path d="M371.0,275.0 L371.0,256.0 L370.9,254.5 L370.9,253.0 L370.9,251.5 L370.9,250.0 L371.0,248.5 L371.1,247.0 L371.3,245.5 L371.4,244.0 L371.7,242.5 L371.9,241.0 L372.2,239.5 L372.6,238.0 L373.0,236.5 L373.4,235.1 L373.9,233.6 L374.4,232.2 L375.0,230.7 L375.6,229.3 L376.3,227.9 L377.0,226.6 L377.8,225.2 L378.6,223.9 L379.5,222.6 L380.4,221.3 L381.4,220.0 L382.5,218.8 L383.6,217.6 L384.7,216.4 L386.0,215.3 L387.2,214.2 L388.5,213.2 L389.9,212.2 L391.2,211.3 L392.6,210.4 L394.1,209.6 L395.5,208.9 L396.9,208.3 L398.3,207.7 L399.8,207.3 L401.2,206.9 L402.6,206.6 L404.0,206.5 L405.3,206.4 L406.6,206.5 L407.9,206.6 L409.2,206.9 L410.4,207.4 L411.5,207.9 L412.6,208.5 L413.7,209.3 L414.7,210.2 L415.7,211.1 L416.6,212.1 L417.5,213.3 L418.4,214.5 L419.2,215.7 L419.9,217.1 L420.7,218.5 L421.3,219.9 L422.0,221.4 L422.6,223.0 L423.2,224.5 L423.7,226.2 L424.2,227.8 L424.6,229.5 L425.0,231.2 L425.4,232.9 L425.8,234.6 L426.1,236.3 L426.3,238.0 L426.5,239.6 L426.7,241.3 L426.9,243.0 L427.0,244.6 L427.1,246.2 L427.1,247.7 L427.1,249.2 L427.1,250.7 L427.1,252.1 L427.0,253.4 L426.8,254.7 L426.7,255.9 L426.5,257.0 L426.5,275.0Z" fill="#111b1c"/>
<path d="M382.6,233.8 Q384,229.5 388,229.3 Q391.5,229.5 392.4,232.8 Q387,234.5 382.6,233.8Z" fill="#f2f2f2"/>
<path d="M361.3,196.5 Q365,187 367.4,179.9 Q367.6,185.5 369,191.8 Z M354,202.5 Q353.2,193.5 352,185.1 Q354.2,193 361,199.5 Z M357,208 Q345.5,209.5 337.4,210.3 Q345,212.3 352.8,215.5 Z" fill="#1e1e1e"/>
<path d="M486.5,275.0 L487.5,258.0 L487.3,256.3 L487.1,254.7 L486.9,253.1 L486.7,251.6 L486.5,250.1 L486.3,248.6 L486.2,247.1 L486.0,245.7 L485.8,244.2 L485.7,242.8 L485.6,241.4 L485.4,240.0 L485.3,238.6 L485.2,237.2 L485.1,235.8 L485.1,234.4 L485.0,233.0 L485.0,231.6 L485.0,230.1 L485.0,228.7 L485.0,227.2 L485.0,225.6 L485.1,224.1 L485.2,222.5 L485.3,220.9 L485.5,219.2 L485.6,217.6 L485.8,215.9 L486.1,214.3 L486.3,212.6 L486.6,210.9 L487.0,209.3 L487.4,207.7 L487.8,206.0 L488.2,204.4 L488.7,202.9 L489.3,201.4 L489.9,199.9 L490.5,198.4 L491.2,197.0 L491.9,195.6 L492.7,194.3 L493.5,193.1 L494.4,191.9 L495.4,190.8 L496.4,189.8 L497.5,188.8 L498.6,188.0 L499.8,187.2 L501.0,186.4 L502.3,185.8 L503.6,185.2 L504.9,184.7 L506.3,184.3 L507.7,183.9 L509.2,183.6 L510.6,183.4 L512.1,183.3 L513.5,183.2 L515.0,183.2 L516.5,183.2 L518.0,183.4 L519.4,183.6 L520.9,183.8 L522.4,184.1 L523.8,184.5 L525.2,184.9 L526.6,185.4 L527.9,186.0 L529.3,186.6 L530.5,187.3 L531.8,188.0 L533.0,188.8 L534.2,189.6 L535.3,190.5 L536.5,191.4 L537.5,192.4 L538.6,193.4 L539.6,194.5 L540.6,195.6 L541.5,196.7 L542.4,197.9 L543.3,199.1 L544.1,200.4 L545.0,201.6 L545.7,203.0 L546.5,204.3 L547.2,205.7 L547.9,207.1 L548.5,208.5 L549.1,209.9 L549.7,211.4 L550.2,212.9 L550.7,214.4 L551.2,215.9 L551.7,217.5 L552.1,219.0 L552.5,220.6 L552.8,222.1 L553.1,223.7 L553.4,225.3 L553.7,226.9 L553.9,228.5 L554.1,230.0 L554.2,231.6 L554.3,233.2 L554.4,234.8 L554.5,236.4 L554.5,237.9 L554.5,239.5 L554.5,241.0 L554.4,242.5 L554.3,244.1 L554.1,245.6 L554.0,247.0 L553.8,248.5 L553.5,249.9 L553.3,251.3 L553.0,252.7 L552.7,254.1 L552.3,255.4 L551.9,256.7 L551.5,258.0 L550.0,275.0Z" fill="#1e1e1e"/>
<path d="M493.0,275.0 L494.0,257.4 L494.0,256.2 L494.0,254.9 L493.9,253.6 L493.8,252.2 L493.7,250.8 L493.6,249.3 L493.4,247.8 L493.2,246.3 L493.0,244.8 L492.8,243.2 L492.6,241.6 L492.4,240.0 L492.2,238.3 L491.9,236.7 L491.7,235.0 L491.5,233.3 L491.4,231.7 L491.2,230.0 L491.0,228.3 L490.9,226.6 L490.8,224.9 L490.7,223.2 L490.7,221.6 L490.7,219.9 L490.7,218.3 L490.8,216.7 L491.0,215.1 L491.1,213.5 L491.4,211.9 L491.7,210.4 L492.0,208.9 L492.4,207.5 L492.9,206.1 L493.5,204.7 L494.1,203.4 L494.8,202.1 L495.6,200.9 L496.4,199.7 L497.3,198.6 L498.2,197.6 L499.2,196.6 L500.3,195.6 L501.4,194.8 L502.6,194.0 L503.8,193.3 L505.0,192.7 L506.3,192.1 L507.6,191.7 L508.9,191.3 L510.3,191.1 L511.7,190.9 L513.1,190.8 L514.5,190.9 L516.0,191.0 L517.4,191.2 L518.9,191.6 L520.3,192.0 L521.7,192.5 L523.2,193.1 L524.6,193.7 L525.9,194.4 L527.3,195.2 L528.6,196.0 L529.8,196.9 L531.1,197.8 L532.3,198.8 L533.4,199.8 L534.5,200.9 L535.6,202.0 L536.6,203.1 L537.6,204.3 L538.5,205.5 L539.4,206.8 L540.3,208.1 L541.1,209.4 L541.9,210.7 L542.7,212.1 L543.4,213.5 L544.0,214.9 L544.7,216.4 L545.3,217.8 L545.8,219.3 L546.3,220.8 L546.8,222.3 L547.2,223.9 L547.6,225.4 L547.9,227.0 L548.2,228.5 L548.5,230.1 L548.7,231.6 L548.9,233.2 L549.0,234.8 L549.1,236.3 L549.1,237.9 L549.1,239.4 L549.1,241.0 L549.0,242.5 L548.9,244.0 L548.8,245.6 L548.6,247.1 L548.3,248.5 L548.0,250.0 L547.7,251.5 L547.4,252.9 L546.9,254.3 L546.5,255.7 L546.0,257.0 L545.0,275.0Z" fill="#e6e6e6"/>
<path d="M492.5,275.0 L492.5,257.0 L492.8,256.1 L493.1,255.0 L493.2,253.9 L493.3,252.6 L493.4,251.3 L493.3,249.9 L493.2,248.4 L493.1,246.8 L493.0,245.2 L492.8,243.5 L492.6,241.8 L492.4,240.1 L492.1,238.3 L491.9,236.5 L491.7,234.7 L491.5,232.8 L491.3,231.0 L491.1,229.2 L490.9,227.4 L490.8,225.6 L490.8,223.8 L490.8,222.1 L490.8,220.4 L491.0,218.8 L491.1,217.2 L491.4,215.7 L491.8,214.3 L492.2,212.9 L492.8,211.6 L493.4,210.5 L494.2,209.4 L495.1,208.4 L496.1,207.5 L497.2,206.8 L498.3,206.1 L499.6,205.5 L500.9,205.1 L502.2,204.7 L503.6,204.4 L505.0,204.2 L506.5,204.1 L507.9,204.1 L509.4,204.2 L510.9,204.4 L512.3,204.7 L513.8,205.1 L515.2,205.5 L516.5,206.1 L517.8,206.7 L519.1,207.4 L520.4,208.2 L521.6,209.0 L522.7,210.0 L523.9,210.9 L525.0,212.0 L526.0,213.1 L527.0,214.2 L528.0,215.5 L529.0,216.7 L529.9,218.0 L530.8,219.4 L531.6,220.7 L532.4,222.2 L533.2,223.6 L533.9,225.1 L534.6,226.6 L535.3,228.1 L535.9,229.6 L536.5,231.2 L537.1,232.7 L537.6,234.3 L538.1,235.9 L538.6,237.4 L539.0,239.0 L539.4,240.6 L539.7,242.1 L540.1,243.7 L540.4,245.2 L540.6,246.7 L540.8,248.2 L541.0,249.6 L541.2,251.1 L541.3,252.4 L541.4,253.8 L541.4,255.1 L541.4,275.0Z" fill="#3f7d80"/>
<path d="M491.5,275.0 L491.5,257.0 L491.7,256.0 L491.8,255.0 L491.9,253.8 L491.9,252.5 L491.9,251.2 L491.8,249.7 L491.7,248.2 L491.5,246.7 L491.4,245.0 L491.2,243.4 L491.0,241.6 L490.8,239.9 L490.6,238.1 L490.4,236.4 L490.2,234.6 L490.1,232.8 L490.0,231.0 L489.9,229.3 L489.9,227.5 L489.9,225.8 L490.0,224.2 L490.2,222.6 L490.4,221.0 L490.7,219.5 L491.1,218.1 L491.6,216.8 L492.2,215.5 L493.0,214.4 L493.8,213.3 L494.7,212.4 L495.8,211.6 L496.9,210.8 L498.1,210.2 L499.4,209.7 L500.7,209.3 L502.1,209.0 L503.5,208.7 L505.0,208.6 L506.4,208.6 L507.9,208.7 L509.4,208.8 L510.9,209.1 L512.3,209.4 L513.7,209.9 L515.1,210.4 L516.4,211.0 L517.7,211.8 L518.9,212.5 L520.1,213.4 L521.2,214.3 L522.3,215.4 L523.3,216.4 L524.3,217.6 L525.3,218.8 L526.2,220.0 L527.1,221.3 L527.9,222.6 L528.7,224.0 L529.5,225.4 L530.2,226.9 L530.9,228.4 L531.5,229.9 L532.1,231.4 L532.6,232.9 L533.2,234.5 L533.6,236.1 L534.1,237.6 L534.5,239.2 L534.8,240.8 L535.2,242.4 L535.5,244.0 L535.7,245.5 L535.9,247.0 L536.1,248.6 L536.3,250.0 L536.4,251.5 L536.5,252.9 L536.5,254.3 L536.5,255.7 L536.5,257.0 L536.5,275.0Z" fill="#111b1c"/>
<path d="M498.6,238.4 L502.2,233 M502.6,238.8 L505,234.8" stroke="#f2f2f2" stroke-width="2" stroke-linecap="round"/>
<path d="M536.4,193.6 Q536.8,188 536.2,184 Q539.5,187 540.5,190 Q541.6,193 542,196 Z M544.4,203.1 Q548.2,198 548.7,197.5 Q551,193.5 552,189.1 Q553.3,194 552.2,198.3 Q550.8,202.5 548.1,206.2 Z M549.3,211 Q551,215.5 553,215.8 Q559,215.5 565.6,214.6 Q561,218.5 558.3,219.6 Q555,221 552.4,221.5 Z" fill="#1e1e1e"/>
<path d="M335,300 L346,266 C362,257 385,251.7 400,251.7 C415,251.7 430,255 438.5,259.5 L486,259.5 C498,256.5 512,255.5 524.3,255.8 C533,256 541,257 548,258.5 L560,300 Z" fill="#858482"/>
<ellipse cx="381.5" cy="267.6" rx="6.6" ry="3.6" transform="rotate(-14 381.5 267.6)" fill="#e6bcbc"/>
<ellipse cx="391" cy="267.5" rx="6.2" ry="2.6" fill="#e6bcbc"/>
<ellipse cx="524.5" cy="269" rx="4.4" ry="3.2" transform="rotate(20 524.5 269)" fill="#e6bcbc"/>
<ellipse cx="531" cy="270.6" rx="5.6" ry="3.8" transform="rotate(38 531 270.6)" fill="#e6bcbc"/>
<path d="M428.3,295.2 Q428.8,300 442.5,304.2 Q465,310.2 487.5,311 Q510,310.6 531.6,305.6" fill="none" stroke="#1f1f1f" stroke-width="3.9" stroke-linecap="butt"/><circle cx="428.3" cy="295.4" r="1.9" fill="#1f1f1f"/>
</g><use href="#art" transform="translate(25,379.7) scale(0.2392) translate(-221,-62)"/><use href="#art" transform="translate(167,22.9) scale(0.0484) translate(-221,-62)"/></svg>
<span style="left:-0.30px;top:5.82px;font-size:6.6px;line-height:7.59px;font-weight:normal;color:#d6d6d6;transform:scaleX(0.9144);">Edit</span>
<span style="left:18.00px;top:5.82px;font-size:6.6px;line-height:7.59px;font-weight:normal;color:#d6d6d6;transform:scaleX(0.9213);">Select</span>
<span style="left:42.60px;top:5.82px;font-size:6.6px;line-height:7.59px;font-weight:normal;color:#d6d6d6;transform:scaleX(0.9657);">View</span>
<span style="left:64.00px;top:5.82px;font-size:6.6px;line-height:7.59px;font-weight:normal;color:#d6d6d6;transform:scaleX(0.9267);">Image</span>
<span style="left:89.00px;top:5.82px;font-size:6.6px;line-height:7.59px;font-weight:normal;color:#d6d6d6;transform:scaleX(0.9691);">Layer</span>
<span style="left:112.50px;top:5.82px;font-size:6.6px;line-height:7.59px;font-weight:normal;color:#d6d6d6;transform:scaleX(0.9595);">Colors</span>
<span style="left:138.70px;top:5.82px;font-size:6.6px;line-height:7.59px;font-weight:normal;color:#d6d6d6;transform:scaleX(0.9735);">Tools</span>
<span style="left:161.80px;top:5.82px;font-size:6.6px;line-height:7.59px;font-weight:normal;color:#d6d6d6;transform:scaleX(0.9573);">Filters</span>
<span style="left:187.00px;top:5.82px;font-size:6.6px;line-height:7.59px;font-weight:normal;color:#d6d6d6;transform:scaleX(0.9524);">Windows</span>
<span style="left:220.00px;top:5.82px;font-size:6.6px;line-height:7.59px;font-weight:normal;color:#d6d6d6;transform:scaleX(0.9945);">Help</span>
<span style="left:275.00px;top:5.32px;font-size:6.6px;line-height:7.59px;font-weight:bold;color:#e2e2e2;transform:scaleX(0.9582);-webkit-text-stroke:0.05px currentColor;">wilbur_vector.xcf-1.0 (RGB color 8-bit non-linear integer, GIMP built-in sRGB, 36 layers) 984x766 – GIMP</span>
<div style="left:5.3px;top:20.2px;width:15.5px;height:13.2px;background:#202020;"></div>
<div style="left:5.9px;top:34px;width:14.1px;height:1.1px;background:#575757;"></div>
<svg style="left:8.5px;top:23.5px" width="9.5" height="9" viewBox="0 0 9.5 9"><rect x="1" y="2" width="7.2" height="5" fill="none" stroke="#cdcdcd" stroke-width="1"/><rect x="3.5" y="0.6" width="2.2" height="1.4" fill="#cdcdcd"/><path d="M1.3,8.6 L2.5,7 M7.9,8.6 L6.7,7" stroke="#cdcdcd" stroke-width="0.9"/><path d="M2.5,4.5 H6.7" stroke="#777" stroke-width="0.6"/></svg>
<div style="left:23.6px;top:20.2px;width:15.2px;height:15.2px;background:#3b3b3b;box-sizing:border-box;border:0.6px solid #444;"></div>
<svg style="left:26.5px;top:23.8px" width="9" height="9" viewBox="0 0 9 9"><path d="M6.5,1.8 Q8.3,2.5 7.8,4.2 L2.2,4.2" fill="none" stroke="#8f8f8f" stroke-width="0.9"/><path d="M2.8,2.8 L1.2,4.4 L2.8,6" fill="#e0e0e0" stroke="#e0e0e0" stroke-width="0.6"/><path d="M2,5.3 Q0.8,7 3,7.6 L7.2,7.6" fill="none" stroke="#e0e0e0" stroke-width="1"/><path d="M6.2,6.3 L7.8,7.6 L6.2,8.8" fill="#d0d0d0"/></svg>
<svg style="left:150.5px;top:24.5px" width="7" height="7" viewBox="0 0 7 7"><rect x="0.9" y="0.9" width="5.4" height="5.4" rx="0.7" fill="none" stroke="#c4c4c4" stroke-width="1"/><rect x="2.6" y="2.6" width="2" height="2" rx="0.5" fill="#f4f4f4"/></svg>
<span style="left:4.00px;top:38.72px;font-size:6.6px;line-height:7.59px;font-weight:bold;color:#d2d2d2;transform:scaleX(0.9721);-webkit-text-stroke:0.05px currentColor;">Move</span>
<span style="left:4.00px;top:49.52px;font-size:6.6px;line-height:7.59px;font-weight:normal;color:#bcbcbc;transform:scaleX(0.9459);">Move:</span>
<div style="left:22.7px;top:46.8px;width:14px;height:12.2px;background:#232323;"></div>
<svg style="left:24.5px;top:48.5px" width="11" height="10" viewBox="0 0 11 10"><path d="M2.8,1.2 H9.5 L8.5,2.2 H1.8Z" fill="#777"/><path d="M2.8,3.3 H9.8 L8,5.8 H1Z" fill="#f0f0f0"/><path d="M1.8,7.4 H8.8 L8,8.3 H1.2Z" fill="#777"/></svg>
<div style="left:39.9px;top:49px;width:8.1px;height:7.8px;background:#686868;box-sizing:border-box;border:0.7px solid #7c7c7c;"></div>
<svg style="left:53.5px;top:48.8px" width="9" height="9" viewBox="0 0 9 9"><path d="M1,8 L8.2,0.8" stroke="#d8d8d8" stroke-width="1"/><circle cx="4.8" cy="4.4" r="1.2" fill="#e8e8e8"/><circle cx="8" cy="1" r="0.7" fill="#d8d8d8"/><circle cx="1.2" cy="7.8" r="0.7" fill="#d8d8d8"/></svg>
<span style="left:4.00px;top:61.52px;font-size:6.6px;line-height:7.59px;font-weight:bold;color:#cdcdcd;transform:scaleX(0.9537);-webkit-text-stroke:0.05px currentColor;">Tool Toggle  (Shift)</span>
<svg style="left:11px;top:71.8px" width="7" height="7" viewBox="0 0 7 7"><circle cx="3.5" cy="3.4" r="2.8" fill="#252525"/></svg>
<span style="left:19.30px;top:71.82px;font-size:6.6px;line-height:7.59px;font-weight:normal;color:#bdbdbd;transform:scaleX(0.9432);">Pick a layer or guide</span>
<svg style="left:11px;top:83.3px" width="7" height="7" viewBox="0 0 7 7"><circle cx="3.5" cy="3.5" r="2.9" fill="#d9508a"/><circle cx="3.5" cy="3.5" r="1.0" fill="#ffffff"/></svg>
<span style="left:19.30px;top:82.82px;font-size:6.6px;line-height:7.59px;font-weight:bold;color:#d4d4d4;transform:scaleX(0.9720);-webkit-text-stroke:0.05px currentColor;">Move the selected layers</span>
<svg style="left:0px;top:252px" width="3" height="8" viewBox="0 0 3 8"><circle cx="1.3" cy="1.4" r="0.55" fill="#d0d0d0"/><circle cx="1.3" cy="3.8" r="0.55" fill="#d0d0d0"/><circle cx="1.3" cy="6.2" r="0.55" fill="#d0d0d0"/></svg>
<svg style="left:161.5px;top:252px" width="3" height="8" viewBox="0 0 3 8"><circle cx="1.4" cy="1.4" r="0.55" fill="#d0d0d0"/><circle cx="1.4" cy="3.8" r="0.55" fill="#d0d0d0"/><circle cx="1.4" cy="6.2" r="0.55" fill="#d0d0d0"/></svg>
<svg style="left:78.5px;top:357px" width="8" height="3" viewBox="0 0 8 3"><circle cx="1" cy="1.4" r="0.6" fill="#cfcfcf"/><circle cx="3.6" cy="1.4" r="0.6" fill="#cfcfcf"/><circle cx="6.2" cy="1.4" r="0.6" fill="#cfcfcf"/></svg>
<div style="left:5px;top:361.2px;width:15.6px;height:13.9px;background:#232323;"></div>
<div style="left:5.6px;top:375.5px;width:14.4px;height:0.9px;background:#505050;"></div>
<svg style="left:8px;top:363.5px" width="10" height="10" viewBox="0 0 10 10"><path d="M5,1.2 L8.6,8.6 L5,7 L1.4,8.6Z" fill="#ececec"/></svg>
<div style="left:23.4px;top:361.2px;width:15.1px;height:15.1px;background:#3b3b3b;box-sizing:border-box;border:0.6px solid #444;"></div>
<div style="left:26.8px;top:365px;width:8.4px;height:8px;background:#6a6a6a;box-sizing:border-box;border:0.7px solid #7a7a7a;"></div>
<svg style="left:150.8px;top:365.8px" width="7" height="7" viewBox="0 0 7 7"><rect x="0.7" y="0.7" width="5.6" height="5.6" rx="1.2" fill="none" stroke="#b8b8b8" stroke-width="1"/><path d="M2.2,4.8 L4.8,2.2 M2.2,4.8 V3 M2.2,4.8 H4" stroke="#e8e8e8" stroke-width="0.9"/></svg>
<div style="left:5px;top:471.8px;width:124.3px;height:5px;background:#2d2d2d;border-radius:2.5px;"></div>
<div style="left:5px;top:472.6px;width:60px;height:4px;background:#8b8b8b;border-radius:2px;"></div>
<div style="left:63.3px;top:470.3px;width:7.6px;height:7.6px;background:#4d4d4d;border-radius:50%;"></div>
<span style="left:138.80px;top:470.92px;font-size:6.6px;line-height:7.59px;font-weight:normal;color:#c2c2c2;transform:scaleX(0.9419);">102%</span>
<svg style="left:13.6px;top:483.2px" width="7.2" height="7" viewBox="0 0 7.2 7"><rect x="0.3" y="0.3" width="6.4" height="6.2" rx="0.8" fill="#e8e8e8"/><rect x="1.8" y="3" width="3.4" height="1" fill="#333"/></svg>
<svg style="left:39.6px;top:483.2px" width="7.2" height="7" viewBox="0 0 7.2 7"><rect x="0.3" y="0.3" width="6.4" height="6.2" rx="0.8" fill="#e8e8e8"/><rect x="1.8" y="3" width="3.4" height="1" fill="#333"/><rect x="3" y="1.8" width="1" height="3.4" fill="#333"/></svg>
<svg style="left:65.6px;top:483.2px" width="7.2" height="7" viewBox="0 0 7.2 7"><rect x="0.3" y="0.3" width="6.4" height="6.2" rx="0.8" fill="#e8e8e8"/><path d="M3,2 L3.9,1.7 V5" stroke="#333" stroke-width="0.9" fill="none"/></svg>
<svg style="left:91.8px;top:483.2px" width="7.2" height="7" viewBox="0 0 7.2 7"><rect x="0.3" y="0.3" width="6.4" height="6.2" rx="0.8" fill="#e8e8e8"/><path d="M3.5,1 V6 M1,3.4 H6" stroke="#333" stroke-width="0.8"/></svg>
<svg style="left:118px;top:483.2px" width="7.2" height="7" viewBox="0 0 7.2 7"><rect x="0.6" y="0.6" width="6" height="5.8" rx="1.2" fill="none" stroke="#e0e0e0" stroke-width="1"/><rect x="2.2" y="2.2" width="2.8" height="2.8" fill="none" stroke="#e0e0e0" stroke-width="0.8"/></svg>
<svg style="left:143.8px;top:483.2px" width="7.2" height="7" viewBox="0 0 7.2 7"><path d="M0.6,6.3 V1.5 Q0.6,0.6 1.5,0.6 H5.7 Q6.6,0.6 6.6,1.5 V3.5" fill="none" stroke="#e0e0e0" stroke-width="1"/><path d="M6.8,6.6 L3.6,3.6 M3.6,3.6 V5.6 M3.6,3.6 H5.6" stroke="#e0e0e0" stroke-width="0.9"/></svg>
<span style="left:174.60px;top:481.92px;font-size:6.6px;line-height:7.59px;font-weight:normal;color:#bdbdbd;transform:scaleX(0.9887);">361, 317</span>
<div style="left:210.7px;top:478px;width:28.1px;height:15px;background:#2e2e2e;"></div>
<span style="left:215.00px;top:481.92px;font-size:6.6px;line-height:7.59px;font-weight:normal;color:#c8c8c8;transform:scaleX(1.1477);">px</span>
<svg style="left:228.5px;top:483px" width="6" height="4" viewBox="0 0 6 4"><path d="M0.3,0.5 H5.7 L3,3.5Z" fill="#e8e8e8"/></svg>
<span style="left:245.00px;top:481.92px;font-size:6.6px;line-height:7.59px;font-weight:normal;color:#c8c8c8;transform:scaleX(0.9618);">102 %</span>
<div style="left:267.6px;top:478px;width:17.4px;height:15px;background:#2e2e2e;"></div>
<svg style="left:273.5px;top:483px" width="6" height="4" viewBox="0 0 6 4"><path d="M0.3,0.5 H5.7 L3,3.5Z" fill="#e8e8e8"/></svg>
<span style="left:286.00px;top:481.92px;font-size:6.6px;line-height:7.59px;font-weight:normal;color:#c8c8c8;transform:scaleX(0.9489);">base (160.3 MB)</span>
<svg style="left:742.8px;top:480.8px" width="9" height="8.2" viewBox="0 0 9 8.2"><rect x="0.5" y="0.5" width="8" height="7.2" fill="none" stroke="#5c5c5c" stroke-width="0.8"/><path d="M2.5,2.5 L5.8,5.5 M5.8,5.5 V4 M5.8,5.5 H4.3" stroke="#6a6a6a" stroke-width="0.7"/></svg>
<div style="left:760.9px;top:20px;width:15.4px;height:13.4px;background:#202020;"></div>
<div style="left:761.3px;top:34.2px;width:14.6px;height:0.9px;background:#575757;"></div>
<svg style="left:764.5px;top:23.6px" width="9" height="9" viewBox="0 0 9 9"><rect x="0.6" y="0.6" width="4.2" height="4.2" fill="#111" stroke="#e8e8e8" stroke-width="0.9"/><rect x="4" y="3.8" width="4.3" height="4.4" fill="#f2f2f2"/></svg>
<svg style="left:766px;top:40.5px" width="9" height="8" viewBox="0 0 9 8"><path d="M1.2,3.2 Q1,1.6 2.6,2 Q4.5,2.6 6.5,2.4 Q7.6,1.2 8.2,0.6 Q8.6,3 7.8,5.6 Q5.5,7.6 3.2,6.8 Q1.6,5.8 1.2,3.2Z" fill="#d8d8d8"/><circle cx="3.8" cy="4" r="0.6" fill="#333"/><circle cx="5.8" cy="4" r="0.6" fill="#333"/><circle cx="8.2" cy="7.3" r="0.45" fill="#ddd"/></svg>
<svg style="left:787.5px;top:40.5px" width="8.6" height="8.2" viewBox="0 0 8.6 8.2"><defs><linearGradient id="gg" x1="0" y1="0" x2="1" y2="1"><stop offset="0" stop-color="#f0f0f0"/><stop offset="1" stop-color="#9a9a9a"/></linearGradient></defs><rect x="0" y="0" width="8.6" height="8.2" fill="url(#gg)"/></svg>
<div style="left:770.9px;top:52.75px;width:105px;height:105px;border-radius:50%;background:conic-gradient(from 0deg, hsl(90,100%,50%), hsl(60,100%,50%) 30deg, hsl(0,100%,50%) 90deg, hsl(300,100%,50%) 150deg, hsl(240,100%,50%) 210deg, hsl(180,100%,50%) 270deg, hsl(120,100%,50%) 330deg, hsl(90,100%,50%) 360deg);"></div>
<div style="left:781.9px;top:63.75px;width:83px;height:83px;border-radius:50%;background:#3c3c3c;"></div>
<span style="left:760.40px;top:160.07px;font-size:6.0px;line-height:6.90px;font-weight:normal;color:#bdbdbd;transform:scaleX(1.0098);">Profile: sRGB</span>
<div style="left:766.7px;top:173.2px;width:6px;height:8px;background:#111;box-sizing:border-box;border:0.8px solid #d8d8d8;"></div>
<div style="left:760.6px;top:168.6px;width:7px;height:7.6px;background:#d26a6a;box-sizing:border-box;border:0.6px solid #e8a0a0;"></div>
<svg style="left:770px;top:168px" width="4" height="4" viewBox="0 0 4 4"><path d="M0.5,0.6 H3 V3.2" fill="none" stroke="#d0d0d0" stroke-width="0.7"/></svg>
<svg style="left:760.4px;top:176.6px" width="4" height="4" viewBox="0 0 4 4"><rect x="0.3" y="0.3" width="2" height="2" fill="#111" stroke="#ddd" stroke-width="0.5"/><rect x="1.8" y="1.8" width="2" height="2" fill="#eee"/></svg>
<div style="left:776.3px;top:168.1px;width:11.1px;height:13.2px;background:#2e2e2e;box-sizing:border-box;border:0.6px solid #454545;"></div>
<svg style="left:777.3px;top:170px" width="9" height="9" viewBox="0 0 9 9"><path d="M1.3,4.3 H7.7 Q7.6,7.2 4.5,7.5 Q1.4,7.2 1.3,4.3Z" fill="none" stroke="#dedede" stroke-width="0.9"/><path d="M3.5,7.6 H5.5" stroke="#dedede" stroke-width="0.8"/><path d="M4.2,4 L7.6,0.9" stroke="#dedede" stroke-width="1"/></svg>
<div style="left:792px;top:168.1px;width:8px;height:13.2px;background:#2e2e2e;box-sizing:border-box;border:0.6px solid #454545;"></div>
<svg style="left:793.8px;top:171.5px" width="6" height="6" viewBox="0 0 6 6"><path d="M3.5,1 Q1,1.4 1.2,3.6 Q1.6,5.2 3.4,5" fill="none" stroke="#d0d0d0" stroke-width="0.9"/></svg>
<div style="left:761px;top:182.8px;width:10.2px;height:10.3px;background:#8a8a8a;"></div>
<div style="left:774.2px;top:182.8px;width:10.2px;height:10.3px;background:#262626;"></div>
<div style="left:788px;top:182.8px;width:10.2px;height:10.3px;background:#c65548;"></div>
<div style="left:761px;top:195.5px;width:10.2px;height:10.3px;background:#d86c6c;"></div>
<div style="left:774.2px;top:195.5px;width:10.2px;height:10.3px;background:#ea7f7f;"></div>
<div style="left:788px;top:195.5px;width:10.2px;height:10.3px;background:#f7f7f7;"></div>
<div style="left:761.4px;top:212.1px;width:15.6px;height:12.8px;background:#232323;"></div>
<div style="left:761.8px;top:225.5px;width:14.8px;height:0.8px;background:#505050;"></div>
<svg style="left:765px;top:214.5px" width="9" height="9" viewBox="0 0 9 9"><path d="M2,1.2 H7.6 L7,2.4 H1.4Z M1.6,3.6 H7.8 L7.2,4.8 H1Z M1.4,6 H7.4 L6.8,7.4 H1Z" fill="#f0f0f0"/></svg>
<div style="left:780.6px;top:211.5px;width:12.8px;height:15px;background:#3b3b3b;box-sizing:border-box;border:0.6px solid #444;"></div>
<svg style="left:783px;top:214.6px" width="8" height="8" viewBox="0 0 8 8"><rect x="0.6" y="0.6" width="6.8" height="6.8" fill="none" stroke="#cfcfcf" stroke-width="0.9"/><path d="M2.8,1 V7 M4.4,1 V7 M6,1 V7" stroke="#cfcfcf" stroke-width="0.6"/></svg>
<div style="left:797.6px;top:211.5px;width:3px;height:15px;background:#3b3b3b;box-sizing:border-box;border:0.6px solid #444;"></div>
<div style="left:760.1px;top:228.2px;width:39.9px;height:0.8px;background:#2b2b2b;"></div>
<div style="left:760.5px;top:229.7px;width:39.5px;height:11.9px;background:#262626;border-top-left-radius:2px;"></div>
<span style="left:762.90px;top:231.67px;font-size:6.0px;line-height:6.90px;font-weight:normal;color:#e6e6e6;transform:scaleX(1.0727);">Mode</span>
<div style="left:760.5px;top:242.2px;width:39.5px;height:10.2px;background:#5a5a5a;"></div>
<span style="left:763.50px;top:243.27px;font-size:6.0px;line-height:6.90px;font-weight:normal;color:#c8c8c8;transform:scaleX(1.0471);">Opacity</span>
<svg style="left:756px;top:252.5px" width="3" height="7" viewBox="0 0 3 7"><circle cx="1.3" cy="1" r="0.5" fill="#cfcfcf"/><circle cx="1.3" cy="3.3" r="0.5" fill="#cfcfcf"/><circle cx="1.3" cy="5.6" r="0.5" fill="#cfcfcf"/></svg>
<div style="left:760px;top:252px;width:40px;height:3px;background:#343434;"></div>
<div style="left:760px;top:255px;width:40px;height:17px;background:#383838;"></div>
<div style="left:776px;top:255px;width:1px;height:17px;background:#2e2e2e;"></div>
<div style="left:793px;top:255px;width:1px;height:17px;background:#2e2e2e;"></div>
<svg style="left:764px;top:260.4px" width="8" height="6" viewBox="0 0 8 6"><path d="M0.4,3.3 Q4,-1.3 7.6,3.3 Q4,6.6 0.4,3.3Z" fill="none" stroke="#e0e0e0" stroke-width="0.75"/><circle cx="4.1" cy="3" r="1.0" fill="#e0e0e0"/></svg>
<svg style="left:780.8px;top:259.5px" width="7" height="7.5" viewBox="0 0 7 7.5"><path d="M1.8,3.5 V2.3 Q1.8,0.5 3.5,0.5 Q5.2,0.5 5.2,2.3 V3.5" fill="none" stroke="#e8e8e8" stroke-width="0.9"/><rect x="0.8" y="3.3" width="5.4" height="3.8" fill="#e8e8e8"/></svg>
<span style="left:796.80px;top:260.05px;font-size:7px;line-height:8.05px;font-weight:bold;color:#d0d0d0;transform:scaleX(0.8990);-webkit-text-stroke:0.05px currentColor;">ƒ</span>
<div style="left:760px;top:272px;width:40px;height:192px;background:#262626;"></div>
<svg style="left:764.4px;top:276.2px" width="8" height="6" viewBox="0 0 8 6"><path d="M0.4,3.3 Q4,-1.3 7.6,3.3 Q4,6.6 0.4,3.3Z" fill="none" stroke="#e0e0e0" stroke-width="0.75"/><circle cx="4.1" cy="3" r="1.0" fill="#e0e0e0"/></svg>
<svg style="left:764.4px;top:290.9px" width="8" height="6" viewBox="0 0 8 6"><path d="M0.4,3.3 Q4,-1.3 7.6,3.3 Q4,6.6 0.4,3.3Z" fill="none" stroke="#e0e0e0" stroke-width="0.75"/><circle cx="4.1" cy="3" r="1.0" fill="#e0e0e0"/></svg>
<svg style="left:764.4px;top:409px" width="8" height="6" viewBox="0 0 8 6"><path d="M0.4,3.3 Q4,-1.3 7.6,3.3 Q4,6.6 0.4,3.3Z" fill="none" stroke="#e0e0e0" stroke-width="0.75"/><circle cx="4.1" cy="3" r="1.0" fill="#e0e0e0"/></svg>
<svg style="left:764.4px;top:423.5px" width="8" height="6" viewBox="0 0 8 6"><path d="M0.4,3.3 Q4,-1.3 7.6,3.3 Q4,6.6 0.4,3.3Z" fill="none" stroke="#e0e0e0" stroke-width="0.75"/><circle cx="4.1" cy="3" r="1.0" fill="#e0e0e0"/></svg>
<svg style="left:764.4px;top:438.2px" width="8" height="6" viewBox="0 0 8 6"><path d="M0.4,3.3 Q4,-1.3 7.6,3.3 Q4,6.6 0.4,3.3Z" fill="none" stroke="#e0e0e0" stroke-width="0.75"/><circle cx="4.1" cy="3" r="1.0" fill="#e0e0e0"/></svg>
<svg style="left:764.4px;top:452.9px" width="8" height="6" viewBox="0 0 8 6"><path d="M0.4,3.3 Q4,-1.3 7.6,3.3 Q4,6.6 0.4,3.3Z" fill="none" stroke="#e0e0e0" stroke-width="0.75"/><circle cx="4.1" cy="3" r="1.0" fill="#e0e0e0"/></svg>
<div style="left:760px;top:464px;width:40px;height:15px;background:#3a3a3a;box-sizing:border-box;border-bottom:1px dotted #5a5a5a;"></div>
<svg style="left:764.4px;top:467.7px" width="8" height="6" viewBox="0 0 8 6"><path d="M0.4,3.3 Q4,-1.3 7.6,3.3 Q4,6.6 0.4,3.3Z" fill="none" stroke="#e0e0e0" stroke-width="0.75"/><circle cx="4.1" cy="3" r="1.0" fill="#e0e0e0"/></svg>
<svg style="left:796px;top:467px" width="4" height="8" viewBox="0 0 4 8"><path d="M1,7 L3,1 L4,4" stroke="#d0d0d0" stroke-width="1" fill="none"/></svg>
<svg style="left:780.6px;top:319.5px" width="8.4" height="8.4" viewBox="0 0 8.4 8.4"><rect width="8.4" height="8.4" fill="#eee"/><path d="M0,0 h2.1 v2.1 h-2.1Z M4.2,0 h2.1 v2.1 h-2.1Z M2.1,2.1 h2.1 v2.1 h-2.1Z M6.3,2.1 h2.1 v2.1 h-2.1Z M0,4.2 h2.1 v2.1 h-2.1Z M4.2,4.2 h2.1 v2.1 h-2.1Z M2.1,6.3 h2.1 v2.1 h-2.1Z M6.3,6.3 h2.1 v2.1 h-2.1Z" fill="#444"/></svg>
<div style="left:760px;top:479px;width:40px;height:14px;background:#3c3c3c;"></div>
<svg style="left:764.2px;top:481.5px" width="8" height="9" viewBox="0 0 8 9"><path d="M1,2.5 H5.5 V8.3 H1Z" fill="none" stroke="#e0e0e0" stroke-width="0.9"/><path d="M3,0.4 V2.6 M1.9,1.5 H4.1" stroke="#e0e0e0" stroke-width="0.8"/><path d="M5.5,2.5 L7,1" stroke="#e0e0e0" stroke-width="0.8"/></svg>
<svg style="left:779.5px;top:481.5px" width="9" height="9" viewBox="0 0 9 9"><path d="M0.6,2 H3.5 L4.2,3 H8.4 V8.4 H0.6Z" fill="none" stroke="#e0e0e0" stroke-width="0.9"/><path d="M2.5,5.6 H6.5 M4.5,3.8 V7.4" stroke="#e0e0e0" stroke-width="0.9"/></svg>
<svg style="left:796.4px;top:483px" width="4" height="7" viewBox="0 0 4 7"><path d="M0.5,6 L3.5,1" stroke="#e0e0e0" stroke-width="0.9"/></svg>
</body></html>
